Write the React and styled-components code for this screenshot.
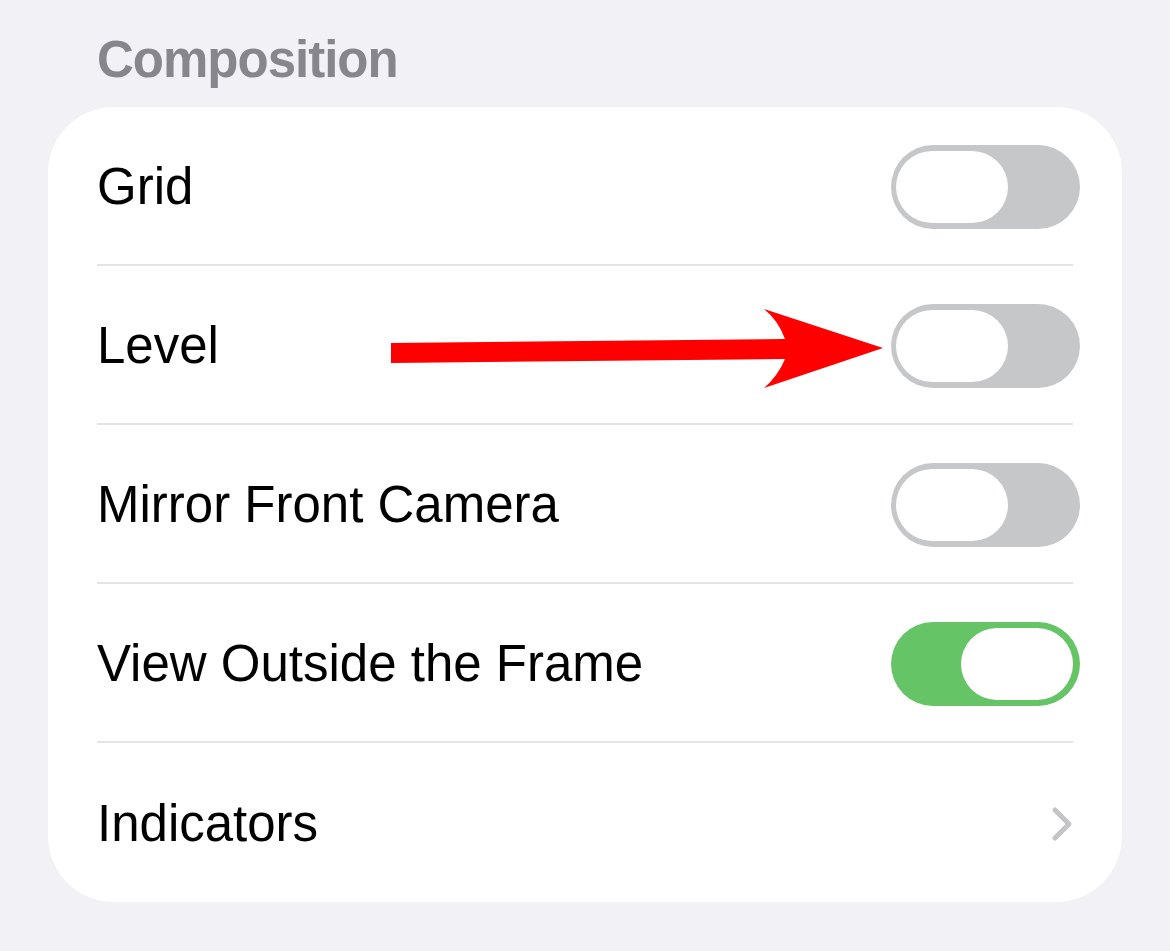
import React from 'react'
import styled, { createGlobalStyle } from 'styled-components';

const GlobalStyle = createGlobalStyle`
    html, body {
        margin: 0;
        padding: 0;
        background-color: #f1f1f6;
    }
    body {
        font-family: 'Liberation Sans', Arial, sans-serif;
        -webkit-font-smoothing: antialiased;
    }
`;

const Page = styled.div`
    width: 1170px;
    height: 951px;
    padding: 0 48px;
    box-sizing: border-box;
    background-color: #f1f1f6;
`;

const Header = styled.div`
    padding: 34px 0 0 49px;
    height: 107px;
    box-sizing: border-box;
    font-size: 51px;
    line-height: 51px;
    font-weight: 700;
    letter-spacing: -1px;
    color: #87868c;
`;

const Card = styled.div`
    position: relative;
    display: flex;
    flex-direction: column;
    background-color: #ffffff;
    border-radius: 66px;
    overflow: hidden;
`;

const Row = styled.div`
    display: flex;
    align-items: center;
    justify-content: space-between;
    height: ${p => p.last ? 159 : 157}px;
    padding: 2px 42px 0 49px;
    box-sizing: border-box;
`;

const Label = styled.span`
    font-size: 51px;
    color: #000;
`;

const Divider = styled.div`
    height: 2px;
    margin: 0 49px;
    background-color: #e4e4e7;
`;

const Track = styled.div`
    display: flex;
    align-items: center;
    justify-content: ${p => p.on ? 'flex-end' : 'flex-start'};
    width: 189px;
    height: 84px;
    padding: 0 ${p => p.on ? 7 : 5}px 0 ${p => p.on ? 7 : 5}px;
    box-sizing: border-box;
    border-radius: 42px;
    background-color: ${p => p.on ? '#65c466' : '#c6c7c9'};
`;

const Knob = styled.div`
    width: 112px;
    height: 72px;
    border-radius: 36px;
    background-color: #fff;
`;

const Chevron = styled.svg`
    width: 22px;
    height: 36px;
    margin-right: 7px;
`;

const Arrow = styled.svg`
    position: absolute;
    left: 340px;
    top: 199px;
    width: 500px;
    height: 86px;
`;

function Switch({ on }) {
    return (
        <Track on={on ? 1 : 0}>
            <Knob />
        </Track>
    )
}

const rows = [
    { label: 'Grid', on: false },
    { label: 'Level', on: false },
    { label: 'Mirror Front Camera', on: false },
    { label: 'View Outside the Frame', on: true },
]

export default function App() {
  return (
    <Page>
        <GlobalStyle />
        <Header>Composition</Header>
        <Card>
            {rows.map(r => (
                <React.Fragment key={r.label}>
                    <Row>
                        <Label>{r.label}</Label>
                        <Switch on={r.on} />
                    </Row>
                    <Divider />
                </React.Fragment>
            ))}
            <Row last>
                <Label>Indicators</Label>
                <Chevron viewBox="0 0 22 36">
                    <polyline points="4,4 18,18 4,32" fill="none" stroke="#c4c4c7" strokeWidth="5" strokeLinecap="round" strokeLinejoin="round" />
                </Chevron>
            </Row>
            <Arrow viewBox="0 0 500 86">
                <path d="M3,37 L397,33 Q390,14 376,3 L495,42 L376,82 Q390,70 397,53 L3,57 Z" fill="#ff0000" />
            </Arrow>
        </Card>
    </Page>
  )
}
